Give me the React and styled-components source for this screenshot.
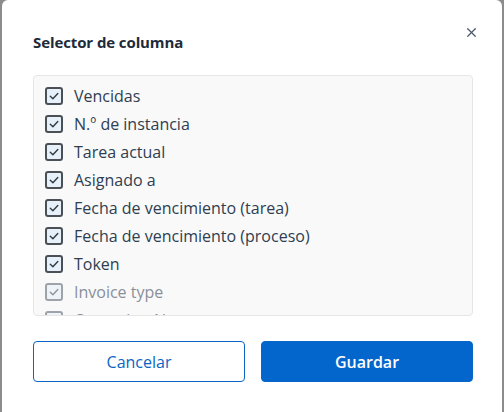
import React from "react";
import styled, { createGlobalStyle } from "styled-components";
import { X } from "lucide-react";

const columns = [
  { label: "Vencidas" },
  { label: "N.º de instancia" },
  { label: "Tarea actual" },
  { label: "Asignado a" },
  { label: "Fecha de vencimiento (tarea)" },
  { label: "Fecha de vencimiento (proceso)" },
  { label: "Token" },
  { label: "Invoice type", disabled: true },
  { label: "Operation No.", disabled: true },
];

const Check = ({ disabled }) => (
  <Box disabled={disabled}>
    <svg width="12" height="12" viewBox="0 0 12 12">
      <path
        d="M2.3 6.2 L4.9 8.7 L9.8 3.4"
        fill="none"
        stroke={disabled ? "#8f959c" : "#333a42"}
        strokeWidth="1.4"
        strokeLinecap="round"
        strokeLinejoin="round"
      />
    </svg>
  </Box>
);

const App = () => {
  return (
    <>
      <GlobalStyle />
      <Backdrop>
        <Modal>
          <Header>
            <Title>Selector de columna</Title>
            <Close aria-label="Cerrar">
              <X size={15} strokeWidth={2} />
            </Close>
          </Header>
          <List>
            {columns.map((c) => (
              <Row key={c.label} disabled={c.disabled}>
                <Check disabled={c.disabled} />
                <Label>{c.label}</Label>
              </Row>
            ))}
          </List>
          <Actions>
            <Button>Cancelar</Button>
            <Button primary>Guardar</Button>
          </Actions>
        </Modal>
      </Backdrop>
    </>
  );
};

const GlobalStyle = createGlobalStyle`
  html, body {
    margin: 0;
    padding: 0;
    background: #8c8c8c;
    overflow: hidden;
  }
  body {
    font-family: "Open Sans", "Noto Sans", sans-serif;
  }
`;

const Backdrop = styled.div`
  width: 504px;
  height: 412px;
  padding-left: 2px;
  box-sizing: border-box;
  overflow: hidden;
`;

const Modal = styled.div`
  width: 500px;
  height: 430px;
  background: #ffffff;
  border-radius: 6px;
  box-sizing: border-box;
  padding: 26px 29px 0 31px;
`;

const Header = styled.div`
  display: flex;
  align-items: flex-start;
  justify-content: space-between;
  height: 49px;
`;

const Title = styled.h2`
  margin: 6px 0 0;
  font-size: 15px;
  font-weight: 700;
  color: #1d2a3a;
  letter-spacing: -0.1px;
`;

const Close = styled.button`
  border: none;
  background: none;
  padding: 0;
  margin: -1px -6px 0 0;
  width: 15px;
  height: 15px;
  display: flex;
  color: #4c5a6b;
  cursor: pointer;
`;

const List = styled.div`
  height: 241px;
  box-sizing: border-box;
  border: 1px solid #e6e6e6;
  border-radius: 4px;
  background: #f9f9f9;
  padding: 6px 11px 0;
  overflow: hidden;
`;

const Row = styled.label`
  display: flex;
  align-items: center;
  gap: 11px;
  height: 28px;
  color: ${({ disabled }) => (disabled ? "#8a9099" : "#2f3e50")};
`;

const Box = styled.span`
  width: 18px;
  height: 18px;
  box-sizing: border-box;
  border: 2px solid ${({ disabled }) => (disabled ? "#9ea3a9" : "#4a4f56")};
  border-radius: 3px;
  background: ${({ disabled }) => (disabled ? "#eef3f9" : "#e6f0fb")};
  display: flex;
  align-items: center;
  justify-content: center;
  flex-shrink: 0;
`;

const Label = styled.span`
  font-size: 16px;
  line-height: 1;
`;

const Actions = styled.div`
  display: grid;
  grid-template-columns: 1fr 1fr;
  gap: 16px;
  margin-top: 25px;
`;

const Button = styled.button`
  height: 41px;
  border-radius: 4px;
  font-family: inherit;
  font-size: 16px;
  font-weight: ${({ primary }) => (primary ? 600 : 400)};
  border: 1px solid #0766c6;
  background: ${({ primary }) => (primary ? "#0366cc" : "#ffffff")};
  color: ${({ primary }) => (primary ? "#ffffff" : "#0a66c2")};
  cursor: pointer;
`;

export default App;
